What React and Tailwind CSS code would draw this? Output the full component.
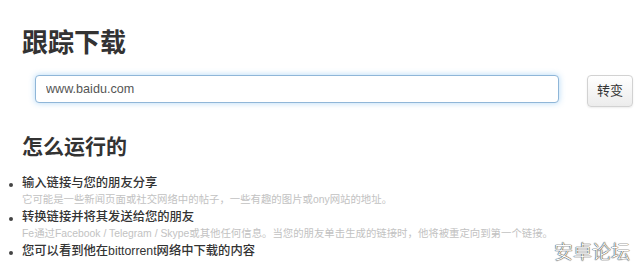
const font = "font-['Liberation_Sans','Noto_Sans_CJK_SC',sans-serif]";

const Item = ({ title, note }) => {
  return (
    <li>
      <div className="flex items-center h-[16px]">
        <span className="w-[4px] h-[4px] rounded-full bg-[#444] ml-[9px] mr-[9px] mt-[3px]" />
        <span className="text-[12.3px] leading-[16px] font-medium text-[#333]">{title}</span>
      </div>
      {note && (
        <p className="pl-[22px] text-[10.4px] leading-[18px] text-[#c2c2c2] whitespace-nowrap">{note}</p>
      )}
    </li>
  );
};

const App = () => {
  return (
    <div className={`relative w-[640px] h-[273px] bg-white overflow-hidden ${font}`}>
      <div className="pl-[22px] pt-[30px]">
        <h1 className="text-[26px] leading-[26px] font-bold text-[#333]">跟踪下载</h1>
      </div>

      <div className="flex items-start pl-[35px] mt-[19px]">
        <input
          type="text"
          defaultValue="www.baidu.com"
          className="w-[524px] h-[28px] px-[10px] rounded-[4px] border border-[#8fb6d8] bg-white text-[12.6px] text-[#555] shadow-[0_0_6px_rgba(82,168,236,0.45)] focus:outline-none"
        />
        <button className="ml-[28px] w-[46px] h-[32px] rounded-[4px] border border-[#d2d2d2] bg-gradient-to-b from-white to-[#ececec] text-[13px] text-[#333] shadow-[0_1px_2px_rgba(0,0,0,0.08)]">
          转变
        </button>
      </div>

      <h2 className="pl-[22px] mt-[29px] text-[21px] leading-[21px] font-bold text-[#333]">怎么运行的</h2>

      <ul className="mt-[18px]">
        <Item
          title="输入链接与您的朋友分享"
          note="它可能是一些新闻页面或社交网络中的帖子，一些有趣的图片或ony网站的地址。"
        />
        <Item
          title="转换链接并将其发送给您的朋友"
          note="Fe通过Facebook / Telegram / Skype或其他任何信息。当您的朋友单击生成的链接时，他将被重定向到第一个链接。"
        />
        <Item title="您可以看到他在bittorrent网络中下载的内容" />
      </ul>

      <div className="absolute right-[10px] bottom-[11px] text-[19px] leading-[19px] font-light text-white [text-shadow:0_0_1px_#444,0_0_1px_#444,0_0_1px_#444]">
        安卓论坛
      </div>
    </div>
  );
};

export default App;
